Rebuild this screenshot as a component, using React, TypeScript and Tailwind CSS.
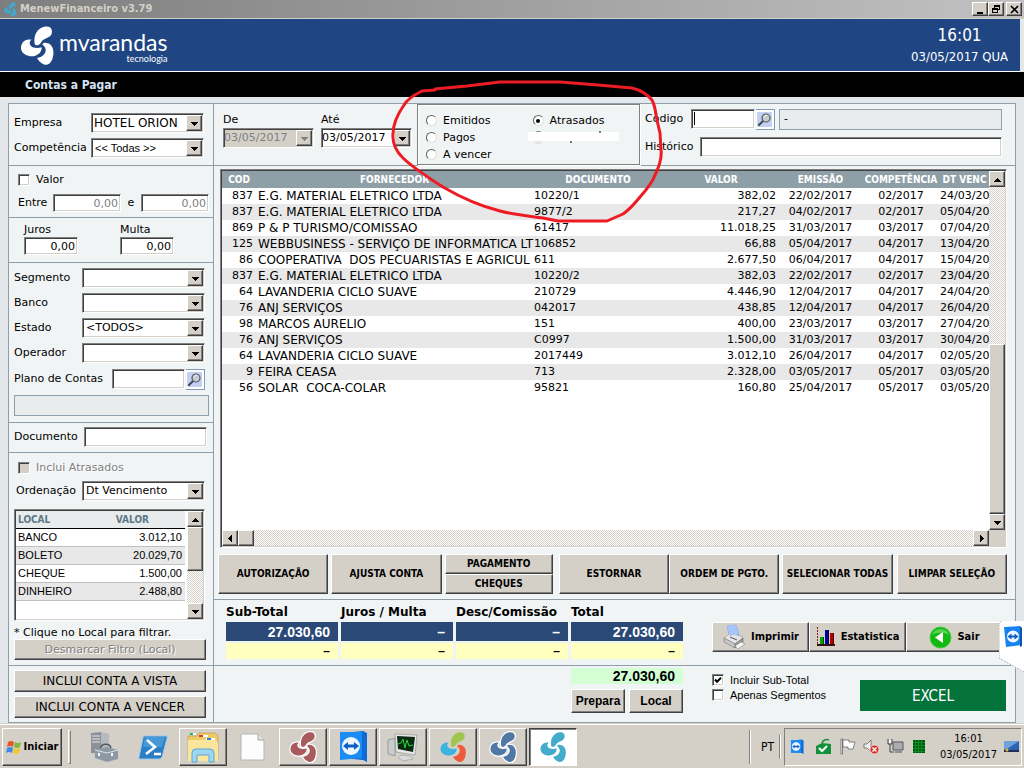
import type { ReactNode } from "react";

const sunken =
  "border border-t-[#808080] border-l-[#808080] border-b-white border-r-white shadow-[inset_1px_1px_0_#404040,inset_-1px_-1px_0_#d4d0c8]";
const raised =
  "border border-t-white border-l-white border-b-[#404040] border-r-[#404040] shadow-[inset_-1px_-1px_0_#808080] bg-[#d4d0c8]";
const line = "border-[#8f9fa9]";
const condensed = "font-['DejaVu_Sans_Condensed','DejaVu_Sans',sans-serif]";
const arial = "font-['Liberation_Sans',Arial,sans-serif]";

type Dir = "up" | "down" | "left" | "right";
const arrowPaths: Record<Dir, string> = {
  up: "M0 6h7v-1h-1v-1h-1v-1h-1v-1h-1v1h-1v1h-1v1h-1z",
  down: "M0 2h7v1h-1v1h-1v1h-1v1h-1v-1h-1v-1h-1v-1h-1z",
  left: "M5 0v7h-1v-1h-1v-1h-1v-1h-1v-1h1v-1h1v-1h1v-1z",
  right: "M2 0v7h1v-1h1v-1h1v-1h1v-1h-1v-1h-1v-1h-1v-1z",
};

function Arrow({ dir, color = "#000" }: { dir: Dir; color?: string }) {
  return (
    <svg width="7" height="7" viewBox="0 0 7 7" shapeRendering="crispEdges" aria-hidden="true">
      <path d={arrowPaths[dir]} fill={color} />
    </svg>
  );
}

function ScrollButton({ dir }: { dir: Dir }) {
  return (
    <button type="button" aria-label={dir} className={`flex h-4 w-4 shrink-0 items-center justify-center ${raised}`}>
      <Arrow dir={dir} />
    </button>
  );
}

function Combo({ id, value = "", className, disabled = false, font = "text-[11px]", label }: {
  id?: string; value?: string; className: string; disabled?: boolean; font?: string; label?: string;
}) {
  return (
    <div className={`grid h-5 items-center ${sunken} ${disabled ? "bg-[#d4d0c8]" : "bg-white"} ${className}`}>
      <select
        id={id}
        aria-label={label}
        disabled={disabled}
        defaultValue={value}
        className={`col-start-1 row-start-1 h-full w-full appearance-none bg-transparent outline-none disabled:text-[#808080] disabled:opacity-100 ${font}`}
      >
        <option>{value}</option>
      </select>
      <span className={`pointer-events-none col-start-1 row-start-1 mr-px flex h-4 w-4 items-center justify-center justify-self-end ${raised}`}>
        <Arrow dir="down" color={disabled ? "#808080" : "#000"} />
      </span>
    </div>
  );
}

function Field({ id, value, className = "", label, disabled }: {
  id?: string; value?: string; className?: string; label?: string; disabled?: boolean;
}) {
  return (
    <input
      id={id}
      aria-label={label}
      type="text"
      disabled={disabled}
      defaultValue={value}
      className={`min-w-0 bg-white px-[2px] pt-px text-[11px] outline-none disabled:text-[#808080] ${sunken} ${className}`}
    />
  );
}

function Check({ label, checked, disabled, font = "" }: { label: string; checked?: boolean; disabled?: boolean; font?: string }) {
  return (
    <label className={`flex h-[13px] items-center gap-[6px] ${font}`}>
      <span className="grid">
        <input
          type="checkbox"
          defaultChecked={checked}
          disabled={disabled}
          className={`col-start-1 row-start-1 h-[12px] w-[12px] appearance-none bg-white disabled:bg-[#d4d0c8] ${sunken}`}
        />
        {checked && (
          <svg className="pointer-events-none col-start-1 row-start-1 h-[12px] w-[12px]" viewBox="0 0 12 12">
            <path d="M3 5.500l2 2.200 4-4" fill="none" stroke="#000" strokeWidth="2" />
          </svg>
        )}
      </span>
      <span className={disabled ? "text-[#808080] [text-shadow:1px_1px_0_#fff]" : ""}>{label}</span>
    </label>
  );
}

function Radio({ label, checked }: { label: string; checked?: boolean }) {
  return (
    <label className="flex h-[17px] items-center gap-[6px]">
      <span className="grid">
        <input
          type="radio"
          name="situacao"
          defaultChecked={checked}
          className="col-start-1 row-start-1 h-[11px] w-[11px] appearance-none rounded-full border border-t-[#606060] border-l-[#606060] border-b-[#e4e0d8] border-r-[#e4e0d8] bg-white"
        />
        {checked && <span className="col-start-1 row-start-1 h-1 w-1 self-center justify-self-center rounded-full bg-black" />}
      </span>
      {label}
    </label>
  );
}

function Button({ children, className = "", disabled }: { children: ReactNode; className?: string; disabled?: boolean }) {
  return (
    <button type="button" disabled={disabled} className={`flex items-center justify-center whitespace-nowrap ${raised} ${className}`}>
      {children}
    </button>
  );
}

function SearchButton() {
  return (
    <button type="button" aria-label="Pesquisar" className="ml-px flex h-[21px] w-[19px] shrink-0 items-center justify-center border border-[#7f9db9] border-l-0 bg-white">
      <svg width="16" height="17" viewBox="0 0 16 17">
        <rect x="0" y="1" width="15" height="15" rx="1" fill="#c3d0f3" />
        <path d="M6 10l-4 4" stroke="#404550" strokeWidth="2" strokeLinecap="round" />
        <circle cx="9" cy="7" r="4" fill="#c8ccd0" stroke="#555b63" strokeWidth="1.200" />
        <path d="M7 6c1-1.500 2-2 3-1.500" stroke="#fff" fill="none" />
      </svg>
    </button>
  );
}

function Propeller({ className, colors, halo }: { className: string; colors: [string, string, string]; halo?: string }) {
  const lobes = [
    "M64 66C58 40 70 12 98 8C116 6 122 18 118 32C112 46 94 45 86 56C80 67 72 72 64 66Z",
    "M46 50C28 50 17 66 20 82C24 100 50 108 66 102C78 98 87 88 86 75C72 79 56 77 51 70C45 63 47 56 53 50Z",
    "M96 60C116 60 125 76 124 94C123 112 116 129 102 131C88 131 76 118 71 109C88 106 98 97 99 84C99 75 93 70 88 66C90 62 92 60 96 60Z",
  ];
  return (
    <svg className={className} viewBox="14 3 114 132" aria-hidden="true">
      {halo && lobes.map((d) => <path key={d} d={d} fill={halo} stroke={halo} strokeWidth="10" />)}
      {lobes.map((d, i) => <path key={d} d={d} fill={colors[i]} />)}
    </svg>
  );
}

function TeamViewer({ className }: { className: string }) {
  return (
    <svg className={className} viewBox="0 0 30 34" aria-hidden="true">
      <path d="M4 3L25 1L29 3V32L25 30L4 28Z" fill="#0d6bd8" />
      <path d="M2 2H24V28L2 30Z" fill="#1c8cf5" />
      <circle cx="13" cy="16" r="9" fill="#eef6ff" />
      <path d="M5 16l5-4v2.500h6v-2.500l5 4-5 4v-2.500h-6v2.500z" fill="#0d5fc4" />
    </svg>
  );
}

const rows: string[][] = [
  ["837", "E.G. MATERIAL ELETRICO LTDA", "10220/1", "382,02", "22/02/2017", "02/2017", "24/03/20"],
  ["837", "E.G. MATERIAL ELETRICO LTDA", "9877/2", "217,27", "04/02/2017", "02/2017", "05/04/20"],
  ["869", "P & P TURISMO/COMISSAO", "61417", "11.018,25", "31/03/2017", "03/2017", "07/04/20"],
  ["125", "WEBBUSINESS - SERVIÇO DE INFORMATICA LT", "106852", "66,88", "05/04/2017", "04/2017", "13/04/20"],
  ["86", "COOPERATIVA  DOS PECUARISTAS E AGRICUL", "611", "2.677,50", "06/04/2017", "04/2017", "15/04/20"],
  ["837", "E.G. MATERIAL ELETRICO LTDA", "10220/2", "382,03", "22/02/2017", "02/2017", "23/04/20"],
  ["64", "LAVANDERIA CICLO SUAVE", "210729", "4.446,90", "12/04/2017", "04/2017", "24/04/20"],
  ["76", "ANJ SERVIÇOS", "042017", "438,85", "12/04/2017", "04/2017", "26/04/20"],
  ["98", "MARCOS AURELIO", "151", "400,00", "23/03/2017", "03/2017", "27/04/20"],
  ["76", "ANJ SERVIÇOS", "C0997", "1.500,00", "31/03/2017", "03/2017", "30/04/20"],
  ["64", "LAVANDERIA CICLO SUAVE", "2017449", "3.012,10", "26/04/2017", "04/2017", "02/05/20"],
  ["9", "FEIRA CEASA", "713", "2.328,00", "03/05/2017", "05/2017", "03/05/20"],
  ["56", "SOLAR  COCA-COLAR", "95821", "160,80", "25/04/2017", "05/2017", "03/05/20"],
];

const cellAlign = [
  "pr-[3px] text-right",
  "pl-[2px] text-[12px]",
  "pl-px",
  "pr-[3px] text-right",
  "text-center",
  "text-center",
  "",
];

const locals = [
  ["BANCO", "3.012,10"],
  ["BOLETO", "20.029,70"],
  ["CHEQUE", "1.500,00"],
  ["DINHEIRO", "2.488,80"],
];

const totals = [
  { label: "Sub-Total", value: "27.030,60" },
  { label: "Juros / Multa", value: "–" },
  { label: "Desc/Comissão", value: "–" },
  { label: "Total", value: "27.030,60" },
];

const track = "bg-[repeating-conic-gradient(#fff_0_25%,#d4d0c8_0_50%)] bg-[length:2px_2px]";

function TitleBar() {
  return (
    <div className="flex h-[19px] items-center border-b border-[#d4d0c8] bg-linear-to-r from-[#7e7e7e] to-[#c2c2c2] pl-[3px] pr-[2px]">
      <Propeller className="h-[15px] w-[14px]" colors={["#3fa9cf", "#3fa9cf", "#3fa9cf"]} />
      <h1 className={`ml-[3px] flex-1 text-[11px] font-bold text-[#d4d0c8] ${condensed}`}>MenewFinanceiro v3.79</h1>
      <Button className="h-[14px] w-4">
        <svg width="10" height="9" shapeRendering="crispEdges" aria-label="Minimizar"><path d="M2 7h6v2h-6z" /></svg>
      </Button>
      <Button className="h-[14px] w-4">
        <svg width="10" height="10" shapeRendering="crispEdges" aria-label="Restaurar">
          <path d="M3 1h6v5h-2v3h-6v-5h2zM4 3v1h3v1h1v-2zM2 6v2h4v-2z" fillRule="evenodd" />
        </svg>
      </Button>
      <Button className="ml-[2px] h-[14px] w-4">
        <svg width="9" height="9" aria-label="Fechar"><path d="M1 1l7 7M8 1l-7 7" stroke="#000" strokeWidth="1.700" /></svg>
      </Button>
    </div>
  );
}

function Header() {
  return (
    <header>
      <div className="mr-1 flex h-[53px] items-center border-b border-white bg-[#204583] pl-[18px] pr-3 text-white">
        <Propeller className="h-[41px] w-[38px]" colors={["#fff", "#fff", "#fff"]} />
        <div className="ml-[3px] flex flex-col items-end pt-[2px] font-['Lato',sans-serif]">
          <span className="text-[23px] leading-[24px]">mvarandas</span>
          <span className="text-[9px] leading-[9px]">tecnologia</span>
        </div>
        <div className={`ml-auto text-center ${condensed}`}>
          <div className="text-[17px] leading-[24px]">16:01</div>
          <div className="text-[13px] leading-[20px]">03/05/2017 QUA</div>
        </div>
      </div>
      <div className="flex h-[25px] items-center bg-black pl-[25px]">
        <h2 className={`text-[12px] font-bold text-[#d3e2f4] ${condensed}`}>Contas a Pagar</h2>
      </div>
    </header>
  );
}

function Sidebar() {
  return (
    <aside className={`w-[205px] shrink-0 border-r ${line} [&>section]:pl-[5px]`}>
      <section className={`flex flex-col gap-[5px] border-b pb-[7px] pt-[9px] ${line}`}>
        <div className="flex items-center justify-between pr-[9px]">
          <label htmlFor="empresa">Empresa</label>
          <Combo id="empresa" value="HOTEL ORION" className="w-[113px]" font="pl-[2px] text-[12px]" />
        </div>
        <div className="flex items-center justify-between pr-[9px]">
          <label htmlFor="competencia">Competência</label>
          <Combo id="competencia" value="<< Todas >>" className="w-[113px]" font={`pl-[3px] text-[11px] ${arial}`} />
        </div>
      </section>

      <section className={`border-b pb-[5px] pt-[7px] ${line}`}>
        <div className="pl-1"><Check label="Valor" /></div>
        <div className="mt-2 flex items-center pl-1">
          <label htmlFor="entre" className="w-[35px]">Entre</label>
          <Field id="entre" value="0,00" disabled className="h-[18px] w-[68px] text-right" />
          <span className="w-5 text-center">e</span>
          <Field label="Valor final" value="0,00" disabled className="h-[18px] w-[68px] text-right" />
        </div>
      </section>

      <section className={`flex gap-[42px] border-b pb-[7px] pt-1 ${line}`}>
        <div className="ml-[10px] w-[54px]">
          <label htmlFor="juros" className="block leading-[15px]">Juros</label>
          <Field id="juros" value="0,00" className="h-[18px] w-full text-right" />
        </div>
        <div className="w-[54px]">
          <label htmlFor="multa" className="block leading-[15px]">Multa</label>
          <Field id="multa" value="0,00" className="h-[18px] w-full text-right" />
        </div>
      </section>

      <section className={`border-b pb-[6px] pr-1 pt-[5px] ${line}`}>
        <div className="flex flex-col gap-[5px] pr-1">
          {[["Segmento", ""], ["Banco", ""], ["Estado", "<TODOS>"], ["Operador", ""]].map(([label, value]) => (
            <div key={label} className="flex items-center justify-between">
              <label htmlFor={label}>{label}</label>
              <Combo id={label} value={value} className="w-[123px]" font="pl-[3px] text-[11px]" />
            </div>
          ))}
        </div>
        <div className="mt-[6px] flex h-5 items-center pr-1">
          <label htmlFor="plano" className="w-[98px] whitespace-nowrap">Plano de Contas</label>
          <Field id="plano" className="h-5 flex-1" />
          <SearchButton />
        </div>
        <output className={`mt-[6px] block h-[21px] border bg-[#e8eced] ${line}`} />
      </section>

      <section className={`flex items-center border-b pb-[5px] pr-[6px] pt-1 ${line}`}>
        <label htmlFor="documento" className="w-[70px]">Documento</label>
        <Field id="documento" className="h-5 flex-1" />
      </section>

      <section className={`border-b pb-[5px] pt-2 ${line}`}>
        <div className="pl-1"><Check label="Inclui Atrasados" disabled /></div>
        <div className="mt-[7px] flex items-center justify-between pl-[2px] pr-2">
          <label htmlFor="ordenacao">Ordenação</label>
          <Combo id="ordenacao" value="Dt Vencimento" className="w-[123px]" font="pl-[3px] text-[11px]" />
        </div>
        <div className={`mr-2 mt-2 flex h-[112px] bg-white p-px ${sunken}`}>
          <div className="min-w-0 flex-1">
            <table className={`w-full text-[11px] ${arial}`}>
              <thead>
                <tr className={`h-[17px] border-b border-black bg-[#e8eced] text-[10px] leading-[15px] text-[#5d7885] ${condensed}`}>
                  <th className="pl-[2px] text-left">LOCAL</th>
                  <th className="pr-9 text-right">VALOR</th>
                </tr>
              </thead>
              <tbody>
                {locals.map(([name, value]) => (
                  <tr key={name} className="h-[18px] border-b border-[#c0c0c0] leading-[15px] even:bg-[#e8e8e8]">
                    <td className="pl-[2px]">{name}</td>
                    <td className="pr-[3px] text-right">{value}</td>
                  </tr>
                ))}
              </tbody>
            </table>
          </div>
          <div className={`ml-[2px] flex w-4 flex-col ${track}`}>
            <ScrollButton dir="up" />
            <div className={`h-11 ${raised}`} />
            <div className="mt-auto"><ScrollButton dir="down" /></div>
          </div>
        </div>
        <p className="h-[18px] leading-[24px]">* Clique no Local para filtrar.</p>
        <div className="pr-[7px]">
          <Button disabled className="h-[21px] w-full text-[#808080] [text-shadow:1px_1px_0_#fff]">Desmarcar Filtro (Local)</Button>
        </div>
      </section>

      <section className="flex flex-col gap-1 py-1 pr-[7px] text-[12px]">
        <Button className="h-[22px]">INCLUI CONTA A VISTA</Button>
        <Button className="h-[22px]">INCLUI CONTA A VENCER</Button>
      </section>
    </aside>
  );
}

function Filters() {
  return (
    <section className={`flex border-b ${line}`}>
      <div className="flex w-[203px] shrink-0 gap-[7px] pl-[9px] pt-2">
        <div className="w-[91px]">
          <label htmlFor="de" className="block leading-4">De</label>
          <Combo id="de" value="03/05/2017" disabled className="w-[91px]" />
        </div>
        <div className="w-[91px]">
          <label htmlFor="ate" className="block leading-4">Até</label>
          <Combo id="ate" value="03/05/2017" className="w-[91px]" />
        </div>
      </div>
      <fieldset className="flex w-[223px] shrink-0 gap-[41px] border border-[#808080] pl-2 pt-[7px] shadow-[1px_1px_0_#fff,inset_1px_1px_0_#fff]">
        <div>
          <Radio label="Emitidos" />
          <Radio label="Pagos" />
          <Radio label="A vencer" />
        </div>
        <div>
          <Radio label="Atrasados" checked />
          <svg width="91" height="17" className="-ml-[5px]" aria-hidden="true">
            <path d="M6 5a5 5 0 0 1 8-1" stroke="#777" fill="none" />
            <path d="M6 13c3 2 5 2 8 0z" fill="#fff" stroke="#ddd" />
            <path d="M0 3h91v9h-91z" fill="#fff" />
            <path d="M43 12v2M72 2v2" stroke="#000" />
          </svg>
        </div>
      </fieldset>
      <div className="flex flex-1 flex-col gap-2 pb-2 pl-[5px] pr-[13px] pt-[5px]">
        <div className="flex h-5 items-center">
          <label htmlFor="codigo" className="w-[46px]">Código</label>
          <Field id="codigo" className="h-5 w-16 bg-[linear-gradient(#000,#000)] bg-[length:1px_13px] bg-[position:2px_2px] bg-no-repeat" />
          <SearchButton />
          <output className={`ml-1 flex h-[21px] flex-1 items-center border bg-[#e8eced] pl-1 ${line}`}>-</output>
        </div>
        <div className="flex items-center">
          <label htmlFor="historico" className="w-[55px]">Histórico</label>
          <Field id="historico" className="h-5 flex-1" />
        </div>
      </div>
    </section>
  );
}

function Accounts() {
  const action = `h-10 min-w-0 flex-1 text-[10px] font-bold ${condensed}`;
  return (
    <section className={`border-b pb-[5px] pt-[3px] ${line}`}>
      <div className={`ml-[6px] mr-2 flex h-[379px] flex-col bg-white p-px ${sunken}`}>
        <div className="flex min-h-0 flex-1">
          <div className="min-w-0 flex-1 overflow-hidden">
            <table className="w-full table-fixed whitespace-pre">
              <colgroup>
                <col className="w-[34px]" />
                <col />
                <col className="w-[130px]" />
                <col className="w-[116px]" />
                <col className="w-[83px]" />
                <col className="w-[78px]" />
                <col className="w-[49px]" />
              </colgroup>
              <thead>
                <tr className={`h-[17px] bg-[#8f9fa8] text-[10px] leading-[17px] text-white ${condensed}`}>
                  {["COD", "FORNECEDOR", "DOCUMENTO", "VALOR", "EMISSÃO", "COMPETÊNCIA", "DT VENC"].map((h) => (
                    <th key={h} className="text-center font-bold">{h}</th>
                  ))}
                </tr>
              </thead>
              <tbody>
                {rows.map((row) => (
                  <tr key={row[2]} className="h-4 leading-4 even:bg-[#e8e8e8]">
                    {row.map((cell, i) => (
                      <td key={i} className={cellAlign[i]}>{cell}</td>
                    ))}
                  </tr>
                ))}
              </tbody>
            </table>
          </div>
          <div className={`flex w-4 shrink-0 flex-col ${track}`}>
            <ScrollButton dir="up" />
            <div className={`mt-auto h-[170px] ${raised}`} />
            <ScrollButton dir="down" />
          </div>
        </div>
        <div className={`flex h-4 ${track}`}>
          <ScrollButton dir="left" />
          <div className={`w-4 ${raised}`} />
          <div className="ml-auto"><ScrollButton dir="right" /></div>
          <div className="w-4 bg-[#d4d0c8]" />
        </div>
      </div>
      <div className="ml-1 mr-2 mt-[6px] flex">
        <Button className={action}>AUTORIZAÇÃO</Button>
        <Button className={`ml-[3px] ${action}`}>AJUSTA CONTA</Button>
        <div className="ml-[3px] flex min-w-0 flex-1 flex-col">
          <Button className={`h-5 text-[10px] font-bold ${condensed}`}>PAGAMENTO</Button>
          <Button className={`h-5 text-[10px] font-bold ${condensed}`}>CHEQUES</Button>
        </div>
        <Button className={`ml-[6px] ${action}`}>ESTORNAR</Button>
        <Button className={action}>ORDEM DE PGTO.</Button>
        <Button className={`ml-[3px] ${action}`}>SELECIONAR TODAS</Button>
        <Button className={`ml-1 ${action}`}>LIMPAR SELEÇÃO</Button>
      </div>
    </section>
  );
}

function Totals() {
  const tool = `h-[30px] w-[97px] gap-[5px] text-[11px] font-bold ${condensed}`;
  return (
    <section className={`flex border-b pb-[6px] pl-3 ${line}`}>
      <div className="flex gap-[3px]">
        {totals.map(({ label, value }) => (
          <div key={label} className="w-28 font-bold">
            <div className="h-[22px] whitespace-nowrap text-[12px] leading-[25px]">{label}</div>
            <div className={`h-[19px] bg-[#2a4977] pr-2 text-right text-[14px] leading-[20px] text-white ${arial}`}>{value}</div>
            <div className={`mt-[2px] h-4 bg-[#ffffc0] pr-2 text-right text-[12px] leading-4 ${arial}`}>–</div>
          </div>
        ))}
      </div>
      <div className="ml-[29px] mt-[22px] flex">
        <Button className={tool}>
          <svg width="24" height="26" viewBox="0 0 24 26">
            <path d="M5 2l9-1 3 10-9 3z" fill="#a9c6fa" stroke="#7d9fe0" strokeWidth=".7" />
            <path d="M2 14l7-5 12 4-1 2-7 5z" fill="#e4e4e4" stroke="#999" strokeWidth=".6" />
            <path d="M5 2l9-1 2 9-8 2z" fill="#a9c6fa" />
            <path d="M2 14l11 6v4L2 18z" fill="#c8c8c8" stroke="#777" strokeWidth=".6" />
            <path d="M13 20l8-6v4l-8 6z" fill="#9a9a9a" stroke="#666" strokeWidth=".6" />
            <path d="M13 22l6-4 4 2-7 5z" fill="#f5f5f5" stroke="#888" strokeWidth=".6" />
            <path d="M8 13l7 3" stroke="#555" />
          </svg>
          Imprimir
        </Button>
        <Button className={tool}>
          <svg width="20" height="20" shapeRendering="crispEdges">
            <path d="M1 0v18" stroke="#802020" strokeWidth="1" strokeDasharray="2 1" />
            <path d="M1 17h18v2h-18z" fill="#301010" />
            <path d="M4 10h3v7h-3z" fill="#00a000" /><path d="M7 10h1v7h-1z" fill="#004000" />
            <path d="M9 3h3v14h-3z" fill="#0000a0" /><path d="M12 3h1v14h-1z" fill="#000040" />
            <path d="M14 6h3v11h-3z" fill="#b00000" /><path d="M17 6h1v11h-1z" fill="#500000" />
          </svg>
          Estatistica
        </Button>
        <Button className={tool}>
          <svg width="23" height="23" viewBox="0 0 23 23">
            <circle cx="11.500" cy="11.500" r="10.500" fill="#14b814" stroke="#3ccf3c" />
            <path d="M3 9a9 9 0 0 1 17 0c-5-3-12-3-17 0z" fill="#6fe06a" opacity=".7" />
            <path d="M14 6v11l-8-5.500z" fill="#fff" />
          </svg>
          Sair
        </Button>
      </div>
    </section>
  );
}

function Footer() {
  return (
    <section className="flex pl-[357px] pr-[9px]">
      <div className="mt-[2px] w-28 shrink-0">
        <output className={`block h-4 bg-[#d4ffd4] pr-2 text-right text-[14px] font-bold leading-4 ${arial}`}>27.030,60</output>
        <div className="mt-[5px] flex gap-1">
          <Button className={`h-6 flex-1 text-[12px] font-bold ${arial}`}>Prepara</Button>
          <Button className={`h-6 flex-1 text-[12px] font-bold ${arial}`}>Local</Button>
        </div>
      </div>
      <div className="ml-[29px] mt-[7px] flex flex-col gap-[2px] whitespace-nowrap">
        <Check label="Incluir Sub-Total" checked font={arial} />
        <Check label="Apenas Segmentos" font={arial} />
      </div>
      <button type="button" className={`ml-auto mt-[14px] h-[31px] w-[146px] bg-[#04733b] text-[15px] text-white ${condensed}`}>EXCEL</button>
    </section>
  );
}

function Taskbar() {
  const task = "h-[38px] w-12 shrink-0";
  return (
    <footer className="flex h-[45px] items-center border-t border-[#d4d0c8] bg-[#d4d0c8] pl-[2px] pr-[2px] pt-px shadow-[inset_0_1px_0_#fff]">
      <Button className={`h-[38px] w-[60px] gap-[2px] text-[11px] font-bold ${condensed}`}>
        <svg width="16" height="16" viewBox="0 0 16 16">
          <path d="M2 3q3-2 6 0l-1 5q-3-2-6 0z" fill="#e8562a" />
          <path d="M9 3q3 2 6 0l-1 5q-3 2-6 0z" fill="#7fba3c" />
          <path d="M1 9q3-2 6 0l-1 5q-3-2-6 0z" fill="#3f8be0" />
          <path d="M8 9q3 2 6 0l-1 5q-3 2-6 0z" fill="#f7c52e" />
        </svg>
        Iniciar
      </Button>
      <span className="ml-[6px] h-[34px] w-[3px] border border-white border-r-[#808080] border-b-[#808080]" />
      <svg className="ml-[19px]" width="30" height="32" viewBox="0 0 30 32">
        <path d="M1 2l10-1v21H1z" fill="#8b9196" /><path d="M11 1l8 2v16h-8z" fill="#b4bac0" />
        <path d="M2 5h8M2 8h8M2 11h8" stroke="#e5e8ea" />
        <path d="M5 19l12-3 11 3v9l-11 3-12-4z" fill="#8c99a5" /><path d="M5 19l12 3 11-3" fill="none" stroke="#dbe2e8" />
        <path d="M11 17c0-5 9-5 10 0" fill="none" stroke="#4e5963" strokeWidth="1.500" />
        <path d="M9 22v3M22 22v3" stroke="#fff" strokeWidth="2" />
      </svg>
      <svg className="ml-[18px]" width="30" height="26" viewBox="0 0 30 26">
        <path d="M6 2h22q2 0 1 2l-5 19q-1 2-3 2H2q-2 0-1-2L5 4q0-2 1-2z" fill="#2a7fc4" stroke="#9cc8ec" />
        <path d="M7 3h20l-3 10H5z" fill="#5aaae2" opacity=".6" />
        <path d="M9 6l8 7-9 7M16 20h7" fill="none" stroke="#fff" strokeWidth="2.500" />
      </svg>
      <Button className={`ml-[11px] ${task}`}>
        <svg width="34" height="32" viewBox="0 0 34 32">
          <path d="M2 5h9l2-3h16l3 3v23H2z" fill="#eccb68" stroke="#b8923a" strokeWidth=".6" />
          <path d="M4 3h6M14 5h8M20 8h9" stroke="#fff" strokeWidth="2" />
          <path d="M4 3h3" stroke="#1db954" strokeWidth="2" /><path d="M13 5h4" stroke="#d0402a" strokeWidth="2" /><path d="M21 8h4" stroke="#2c7be0" strokeWidth="2" />
          <path d="M2 9h28l2 3v18H2z" fill="#f9e59b" />
          <path d="M6 31V22q0-4 4-4h14q4 0 4 4v9h-5v-7H11v7z" fill="#9ed6f2" stroke="#5aa7d0" />
        </svg>
      </Button>
      <svg className="ml-[13px]" width="26" height="28" viewBox="0 0 26 28">
        <path d="M1 1h17l6 6v20H1z" fill="#fdfdfd" stroke="#b5b5b5" /><path d="M18 1v6h6" fill="#e5e5e5" stroke="#a5a5a5" />
      </svg>
      <div className="ml-[13px] flex gap-[2px]">
        <Button className={task}><Propeller className="h-8 w-8" colors={["#a85a5c", "#a85a5c", "#a85a5c"]} halo="#fff" /></Button>
        <Button className={task}><TeamViewer className="h-[34px] w-[30px]" /></Button>
        <Button className={task}>
          <svg width="32" height="30" viewBox="0 0 32 30">
            <path d="M1 8l7-2v18l-7-2z" fill="#c9cdd0" stroke="#777" strokeWidth=".6" />
            <path d="M8 2l22 1-2 20-19-3z" fill="#e5e7e8" stroke="#888" strokeWidth=".6" />
            <path d="M10 4l18 1-2 15-15-3z" fill="#0b2a12" />
            <path d="M11 12l3-1 2-4 2 9 2-8 2 6 4-1" fill="none" stroke="#24d93a" />
            <path d="M14 23l9 1 3 3-10 2-5-3z" fill="#d8dadb" stroke="#888" strokeWidth=".5" />
          </svg>
        </Button>
        <Button className={task}><Propeller className="h-8 w-8" colors={["#9fc54d", "#3ab4e0", "#ee5a3a"]} /></Button>
        <Button className={task}><Propeller className="h-8 w-8" colors={["#4f78a5", "#4f78a5", "#4f78a5"]} halo="#fff" /></Button>
        <button type="button" className="flex h-[38px] w-12 items-center justify-center border border-t-[#404040] border-l-[#404040] border-b-white border-r-white bg-white shadow-[inset_1px_1px_0_#808080]">
          <Propeller className="h-8 w-8" colors={["#45abcb", "#45abcb", "#45abcb"]} />
        </button>
      </div>
      <span className="ml-auto h-[34px] w-[2px] border-l border-r border-l-[#808080] border-r-white" />
      <span className={`ml-[10px] text-[12px] ${condensed}`}>PT</span>
      <span className="ml-[5px] h-6 w-[2px] border-l border-r border-l-[#808080] border-r-white" />
      <div className="ml-[3px] flex h-[38px] w-[238px] items-center border border-t-[#808080] border-l-[#808080] border-b-white border-r-white pl-[5px] pr-[2px]">
        <TeamViewer className="h-[16px] w-[14px]" />
        <svg className="ml-[11px]" width="17" height="17" viewBox="0 0 17 17">
          <path d="M1 8l6-3 9 1v10H1z" fill="#11923a" /><path d="M7 5c1-3 4-4 7-3" fill="none" stroke="#11923a" strokeWidth="1.500" />
          <path d="M4 10l3 3 5-5" fill="none" stroke="#fff" strokeWidth="2" />
        </svg>
        <svg className="ml-[7px]" width="17" height="17" viewBox="0 0 17 17">
          <path d="M2 1h1.500v15H2z" fill="#fff" stroke="#555" strokeWidth=".7" /><path d="M4 2h6v2h6l-2 7H9V9H4z" fill="#fff" stroke="#666" strokeWidth=".8" />
        </svg>
        <svg className="ml-[7px]" width="17" height="17" viewBox="0 0 17 17">
          <path d="M1 6h3l4-4v12l-4-4H1z" fill="#eee" stroke="#666" strokeWidth=".8" />
          <circle cx="11.500" cy="11.500" r="4.500" fill="#d9342b" stroke="#fff" strokeWidth=".6" /><path d="M9.500 9.500l4 4M13.500 9.500l-4 4" stroke="#fff" strokeWidth="1.300" />
        </svg>
        <svg className="ml-[7px]" width="17" height="17" viewBox="0 0 17 17">
          <path d="M6 4h10v8H6z" fill="#a9adb0" stroke="#555" /><path d="M8 14h7" stroke="#555" />
          <path d="M1 1v5h4V1M3 6v8h4" fill="none" stroke="#444" /><path d="M2 2h2v3H2z" fill="#fff" />
        </svg>
        <svg className="ml-[9px]" width="12" height="13" viewBox="0 0 12 13" shapeRendering="crispEdges">
          <path d="M0 0h12v13H0z" fill="#005a10" /><path d="M0 2h12M0 5h12M0 8h12M0 11h12M2 0v13M5 0v13M8 0v13" stroke="#0b8c22" />
        </svg>
        <div className={`ml-auto text-center text-[11px] leading-4 ${condensed}`}>
          <div>16:01</div>
          <div>03/05/2017</div>
        </div>
        <svg className="ml-[7px]" width="15" height="13" viewBox="0 0 15 13">
          <path d="M0 1h15v9H0z" fill="#2d62b0" /><path d="M0 1h15L3 9H0z" fill="#6ea2de" /><path d="M0 10h15v2H0z" fill="#1f2e52" /><circle cx="3" cy="10" r="1.500" fill="#f0b429" />
        </svg>
      </div>
    </footer>
  );
}

export default function App() {
  return (
    <div className="relative flex min-h-screen flex-col overflow-hidden bg-[#e3e7e9] font-['DejaVu_Sans',Verdana,sans-serif] text-[11px] leading-[14px] text-black">
      <TitleBar />
      <Header />
      <main className={`mb-auto ml-2 mr-2 mt-[6px] flex border bg-[#f1f4f4] ${line}`}>
        <Sidebar />
        <div className="flex min-w-0 flex-1 flex-col">
          <Filters />
          <Accounts />
          <Totals />
          <Footer />
        </div>
      </main>
      <Taskbar />

      <button type="button" aria-label="TeamViewer" className="absolute right-0 top-[621px]">
        <svg width="25" height="53" viewBox="0 0 25 53">
          <path d="M3 0H25V52L0 37V3z" fill="#fff" />
          <path d="M25 51L0 37V3l3-3" fill="none" stroke="#a8b0b4" strokeDasharray="2 1" />
          <path d="M5 6l16-1 1 19-15 2z" fill="#1683ee" /><path d="M21 5l2 2v18l-2 1z" fill="#0a55b0" />
          <circle cx="14" cy="15.500" r="6" fill="#f2f8ff" />
          <path d="M8.500 15.500l4-3v2h3v-2l4 3-4 3v-2h-3v2z" fill="#0d5fc4" />
        </svg>
      </button>
      <svg className="pointer-events-none absolute left-[384px] top-[74px]" width="288" height="156" viewBox="384 74 288 156" aria-hidden="true">
        <path
          d="M435 90L422 91C412 96 406 101 404 105C397 115 393 126 393 134C392 145 397 152 403 158C410 165 430 179 443 187C460 197 480 206 500 211C515 215 530 216 543 218L558 221H607L623 214C630 209 636 202 640 197C648 188 653 181 655 175C660 165 662 158 661 150L660 133C658 125 657 120 656 115C655 106 654 104 652 100C647 94 640 90 632 88L598 85L560 82H500L467 86L435 89"
          fill="none" stroke="#ed1c24" strokeWidth="3" strokeLinejoin="round" strokeLinecap="round"
        />
      </svg>
    </div>
  );
}
